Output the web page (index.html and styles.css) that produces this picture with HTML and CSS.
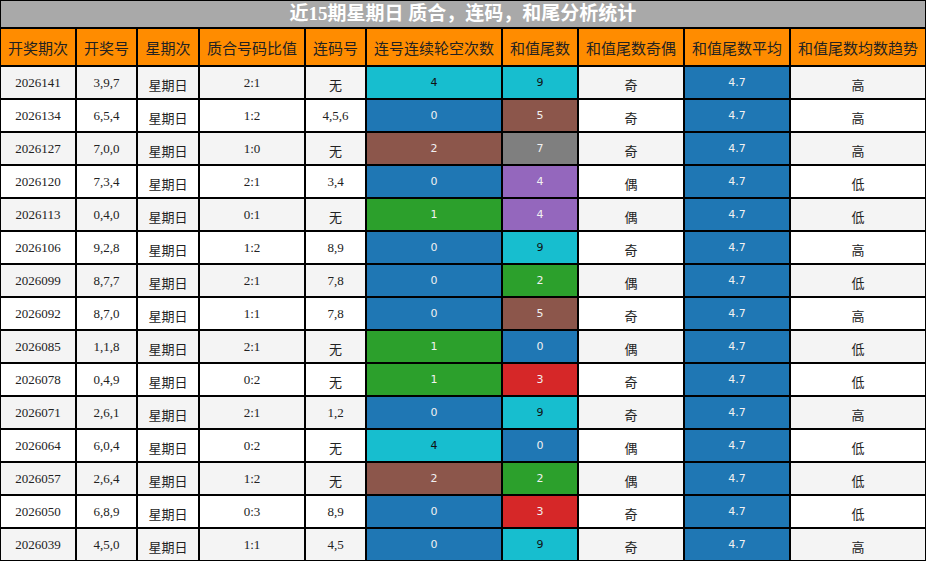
FILE: index.html
```html
<!DOCTYPE html>
<html lang="zh">
<head>
    <meta charset="UTF-8">
    <title>近15期星期日 质合，连码，和尾分析统计</title>
    <link rel="stylesheet" href="styles.css">
</head>
<body>

    <table class="stats-table">
        <caption class="stats-title">近15期星期日 质合，连码，和尾分析统计</caption>
        <thead>
            <tr>
                <th class="c1">开奖期次</th>
                <th class="c2">开奖号</th>
                <th class="c3">星期次</th>
                <th class="c4">质合号码比值</th>
                <th class="c5">连码号</th>
                <th class="c6">连号连续轮空次数</th>
                <th class="c7">和值尾数</th>
                <th class="c8">和值尾数奇偶</th>
                <th class="c9">和值尾数平均</th>
                <th class="c10">和值尾数均数趋势</th>
            </tr>
        </thead>
        <tbody id="statsBody"></tbody>
    </table>

    <script>
        // 期次, 开奖号, 质合比, 连码, 轮空(值,色), 和尾(值,色), 奇偶, 趋势
        const rows = [
            ['2026141', '3,9,7', '2:1', '无', 4, 'cyan', 9, 'cyan', '奇', '高'],
            ['2026134', '6,5,4', '1:2', '4,5,6', 0, 'blue', 5, 'brown', '奇', '高'],
            ['2026127', '7,0,0', '1:0', '无', 2, 'brown', 7, 'gray', '奇', '高'],
            ['2026120', '7,3,4', '2:1', '3,4', 0, 'blue', 4, 'purple', '偶', '低'],
            ['2026113', '0,4,0', '0:1', '无', 1, 'green', 4, 'purple', '偶', '低'],
            ['2026106', '9,2,8', '1:2', '8,9', 0, 'blue', 9, 'cyan', '奇', '高'],
            ['2026099', '8,7,7', '2:1', '7,8', 0, 'blue', 2, 'green', '偶', '低'],
            ['2026092', '8,7,0', '1:1', '7,8', 0, 'blue', 5, 'brown', '奇', '高'],
            ['2026085', '1,1,8', '2:1', '无', 1, 'green', 0, 'blue', '偶', '低'],
            ['2026078', '0,4,9', '0:2', '无', 1, 'green', 3, 'red', '奇', '低'],
            ['2026071', '2,6,1', '2:1', '1,2', 0, 'blue', 9, 'cyan', '奇', '高'],
            ['2026064', '6,0,4', '0:2', '无', 4, 'cyan', 0, 'blue', '偶', '低'],
            ['2026057', '2,6,4', '1:2', '无', 2, 'brown', 2, 'green', '偶', '低'],
            ['2026050', '6,8,9', '0:3', '8,9', 0, 'blue', 3, 'red', '奇', '低'],
            ['2026039', '4,5,0', '1:1', '4,5', 0, 'blue', 9, 'cyan', '奇', '高']
        ];

        function cell(text, cls) {
            return '<td class="' + cls + '">' + text + '</td>';
        }

        const body = document.getElementById('statsBody');
        let html = '';
        rows.forEach(r => {
            html += '<tr>'
                + cell(r[0], 'num')
                + cell(r[1], 'num')
                + cell('星期日', 'cjk')
                + cell(r[2], 'num')
                + cell(r[3], r[3] === '无' ? 'cjk' : 'num')
                + cell(r[4], 'color ' + r[5])
                + cell(r[6], 'color ' + r[7])
                + cell(r[8], 'cjk')
                + cell('4.7', 'color blue')
                + cell(r[9], 'cjk')
                + '</tr>';
        });
        body.innerHTML = html;
    </script>

</body>
</html>
```

FILE: styles.css
```css
body {
    margin: 0;
    padding: 0;
    background: #fff;
    font-family: "Noto Sans CJK SC", "Noto Sans", sans-serif;
}

.stats-table {
    width: 926px;
    border-collapse: separate;
    border-spacing: 0;
    table-layout: fixed;
}

.stats-title {
    box-sizing: border-box;
    height: 28px;
    line-height: 26px;
    background-color: #a9a9a9;
    color: #fff;
    font-family: "Liberation Serif", "Noto Sans CJK SC", serif;
    font-weight: bold;
    font-size: 19px;
    text-align: center;
    border: 1px solid #000;
}

.stats-table th {
    box-sizing: border-box;
    height: 38px;
    padding: 0;
    background-color: #ff8c00;
    color: #222;
    font-weight: normal;
    font-size: 15px;
    line-height: 1;
    text-align: center;
    border: 1px solid #000;
    white-space: nowrap;
}

.c1 { width: 76px; }
.c2 { width: 61px; }
.c3 { width: 62px; }
.c4 { width: 106px; }
.c5 { width: 61px; }
.c6 { width: 136px; }
.c7 { width: 76px; }
.c8 { width: 106px; }
.c9 { width: 106px; }
.c10 { width: 136px; }

.stats-table td {
    box-sizing: border-box;
    height: 33px;
    padding: 0;
    line-height: 1;
    text-align: center;
    border: 1px solid #000;
    color: #222;
}

.stats-table tbody tr:nth-child(odd) {
    background-color: #f4f4f4;
}

.stats-table tbody tr:nth-child(even) {
    background-color: #fff;
}

.num {
    font-family: "Liberation Serif", serif;
    font-size: 13px;
}

.stats-table td.cjk {
    font-size: 13px;
    padding-top: 3px;
}

.stats-table td.color {
    font-family: "DejaVu Sans", sans-serif;
    font-size: 11px;
    color: #f1f1f1;
}

.blue { background-color: #1f77b4; }
.green { background-color: #2ca02c; }
.red { background-color: #d62728; }
.purple { background-color: #9467bd; }
.brown { background-color: #8c564b; }
.gray { background-color: #7f7f7f; }

.stats-table td.cyan {
    background-color: #17becf;
    color: #111;
}
```
